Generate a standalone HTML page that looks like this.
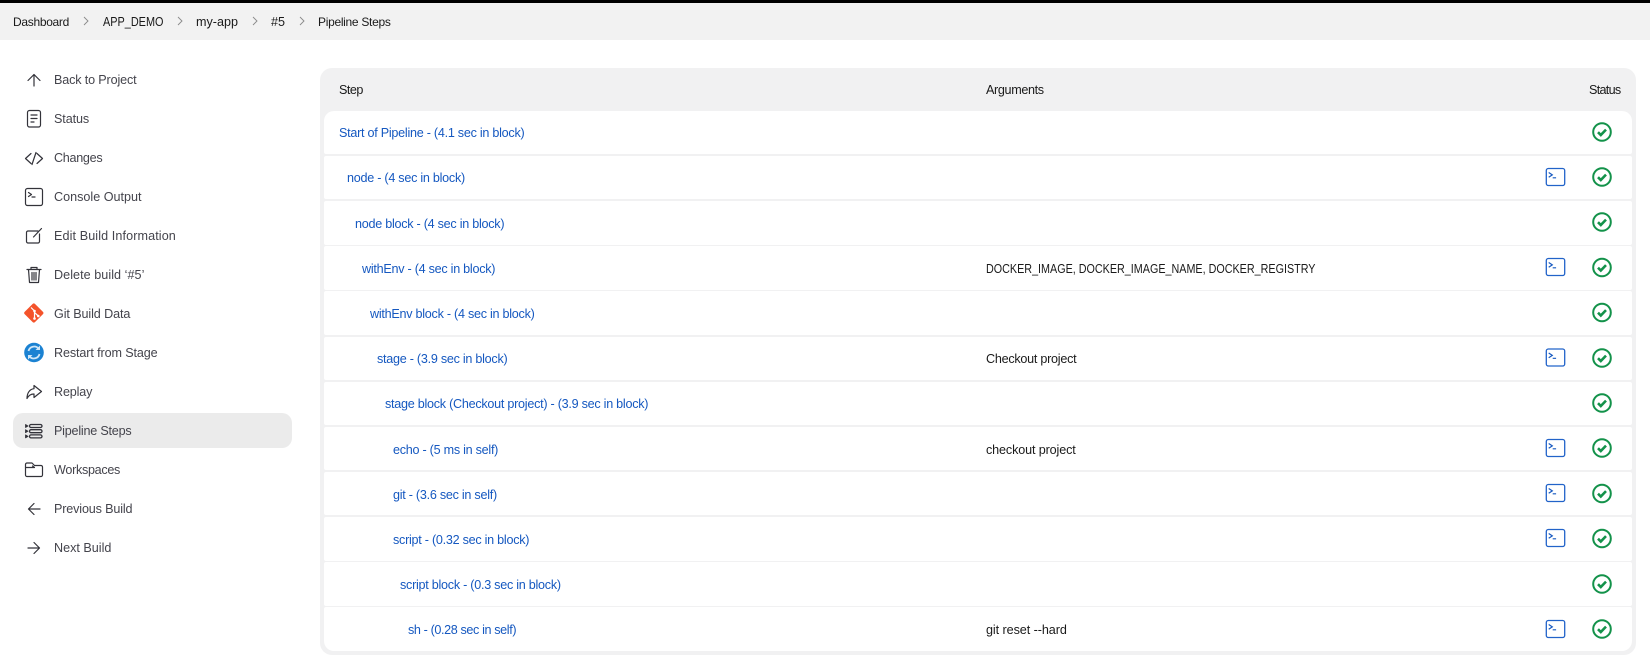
<!DOCTYPE html>
<html><head><meta charset="utf-8"><style>
html,body{margin:0;padding:0;background:#fff;width:1650px;height:662px;overflow:hidden;font-family:"Liberation Sans",sans-serif;font-size:12.6px;color:#1a1a1a}
#w{position:absolute;left:0;top:0;width:1650px;height:662px;filter:blur(.35px)}
.a{position:absolute;white-space:nowrap;line-height:16px}
.top{position:absolute;left:0;top:0;width:1650px;height:3px;background:#000}
.bc{position:absolute;left:0;top:3px;width:1650px;height:37px;background:#f2f2f2}
.hl{position:absolute;left:13px;top:413px;width:279px;height:35px;border-radius:10px;background:#ebebeb}
.side{color:#44444c;left:54px;letter-spacing:-.1px}
.panel{position:absolute;left:320px;top:68px;width:1316px;height:587px;background:#f1f1f2;border-radius:12px}
.row{position:absolute;left:324px;width:1308px;height:43.6px;background:#fff;border-radius:2px}
.l{color:#1558c0;letter-spacing:-.26px}
svg{position:absolute;overflow:visible}
</style></head><body><div id="w">
<div class="top"></div><div class="bc"></div>
<div class="a" style="left:13px;top:14px;font-size:12px;letter-spacing:-.3px">Dashboard</div>
<div class="a" style="left:103px;top:14px;transform:scaleX(.864);transform-origin:0 0">APP_DEMO</div>
<div class="a" style="left:196px;top:14px">my-app</div>
<div class="a" style="left:271px;top:14px">#5</div>
<div class="a" style="left:318px;top:14px;font-size:12px;letter-spacing:-.3px">Pipeline Steps</div>
<svg style="left:0;top:0" width="320" height="40" fill="none" stroke="#8a8a8a" stroke-width=".9"><path d="M84 17l4 4-4 4M178 17l4 4-4 4M253 17l4 4-4 4M300 17l4 4-4 4"/></svg>

<div class="hl"></div>
<div class="a side" style="top:72px;letter-spacing:-.15px">Back to Project</div>
<div class="a side" style="top:111px">Status</div>
<div class="a side" style="top:150px;letter-spacing:-.3px">Changes</div>
<div class="a side" style="top:189px;letter-spacing:0">Console Output</div>
<div class="a side" style="top:228px;letter-spacing:.1px">Edit Build Information</div>
<div class="a side" style="top:267px;letter-spacing:.05px">Delete build ‘#5’</div>
<div class="a side" style="top:306px">Git Build Data</div>
<div class="a side" style="top:345px;letter-spacing:-.12px">Restart from Stage</div>
<div class="a side" style="top:384px;letter-spacing:-.15px">Replay</div>
<div class="a side" style="top:423px;letter-spacing:-.22px">Pipeline Steps</div>
<div class="a side" style="top:462px;letter-spacing:-.3px">Workspaces</div>
<div class="a side" style="top:501px;letter-spacing:-.15px">Previous Build</div>
<div class="a side" style="top:540px;letter-spacing:0">Next Build</div>

<svg style="left:0;top:0" width="60" height="560" fill="none" stroke="#33333a" stroke-width="1.2" stroke-linecap="round" stroke-linejoin="round">
<path d="M34 86V74.500M28 80.500l6-6 6 6"/>
<rect x="27.500" y="110.500" width="13" height="16.500" rx="2"/><path d="M31 115h6M31 118.500h6M31 122h3"/>
<path d="M31 153.500l-5.500 5 5.500 5M37 153.500l5.500 5-5.500 5M36 152.500l-4 12"/>
<rect x="25.500" y="188.500" width="17" height="17" rx="2"/><path d="M28.500 192.500l3 2-3 2M32 197h3"/>
<path d="M38 231H28a1.500 1.500 0 0 0-1.500 1.500v9a1.500 1.500 0 0 0 1.500 1.500h10a1.500 1.500 0 0 0 1.500-1.500V234M33.500 237l8-8.500"/>
<path d="M27 269.500h14M31 269.500v-2h6v2M28.500 269.500l1 13h9l1-13M32 272.500v7.500M34 272.500v7.500M36 272.500v7.500"/>
<path d="M41.500 391.500L34 385.500v3.200c-4.500.5-7 4.500-7 9.800 1.500-3 4-4.500 7-4.500v3.500z"/>
<path d="M25.500 475v-10.500a1.500 1.500 0 0 1 1.500-1.500h5l2.500 2.500H41a1.500 1.500 0 0 1 1.500 1.500v8a1.500 1.500 0 0 1-1.500 1.500H27a1.500 1.500 0 0 1-1.500-1.500zM25.500 467.500h9l-2-1.500"/>
<path d="M40 509H28.500M34 503.500l-5.500 5.500 5.500 5.500"/>
<path d="M28 548h11.500M34 542.500l5.500 5.500-5.500 5.500"/>
<rect x="29.500" y="424.500" width="12.500" height="3" rx="1.500" stroke-width="1.300"/>
<rect x="29.500" y="429.700" width="12.500" height="3" rx="1.500" stroke-width="1.300"/>
<rect x="29.500" y="434.900" width="12.500" height="3" rx="1.500" stroke-width="1.300"/>
<path d="M25.500 424.500v3l2.500-1.500zM25.500 429.700v3l2.500-1.500zM25.500 434.900v3l2.500-1.500z" fill="#33333a" stroke-width=".8"/>
</svg>
<svg style="left:0;top:0" width="60" height="400">
<rect x="-7.300" y="-7.300" width="14.600" height="14.600" rx="1.800" transform="translate(33.800,313) rotate(45)" fill="#f4532b"/>
<path d="M31 307.500l3.500 3.500v7.500M34.500 312.500l3.800 3.500" stroke="#fff" stroke-width="1.200" fill="none"/>
<circle cx="34.500" cy="311" r="1.300" fill="#fff"/><circle cx="34.500" cy="318.500" r="1.300" fill="#fff"/><circle cx="38.300" cy="316" r="1.300" fill="#fff"/>
<circle cx="34" cy="352.500" r="9.800" fill="#1b82d2"/>
<path d="M28.500 351a5.800 5.800 0 0 1 10-2.500M39.500 354a5.800 5.800 0 0 1-10 2.500" stroke="#cfe6f7" stroke-width="1.800" fill="none"/>
<path d="M40 345.500v4.500h-4.500zM28 359.500V355h4.500z" fill="#cfe6f7"/>
</svg>

<div class="panel"></div>
<div class="a" style="left:339px;top:82px;letter-spacing:-.5px">Step</div>
<div class="a" style="left:986px;top:82px;letter-spacing:-.35px">Arguments</div>
<div class="a" style="left:1589px;top:82px;letter-spacing:-.7px">Status</div>

<div class="row" style="top:110.700px;border-radius:10px 10px 2px 2px"></div>
<div class="row" style="top:155.900px"></div>
<div class="row" style="top:201px"></div>
<div class="row" style="top:246.200px"></div>
<div class="row" style="top:291.300px"></div>
<div class="row" style="top:336.500px"></div>
<div class="row" style="top:381.600px"></div>
<div class="row" style="top:426.800px"></div>
<div class="row" style="top:471.900px"></div>
<div class="row" style="top:517.100px"></div>
<div class="row" style="top:562.200px"></div>
<div class="row" style="top:607.400px;border-radius:2px 2px 10px 10px"></div>

<div class="a l" style="left:339px;top:125px">Start of Pipeline - (4.1 sec in block)</div>
<div class="a l" style="left:347px;top:170px">node - (4 sec in block)</div>
<div class="a l" style="left:355px;top:216px">node block - (4 sec in block)</div>
<div class="a l" style="left:362px;top:261px">withEnv - (4 sec in block)</div>
<div class="a l" style="left:370px;top:306px">withEnv block - (4 sec in block)</div>
<div class="a l" style="left:377px;top:351px">stage - (3.9 sec in block)</div>
<div class="a l" style="left:385px;top:396px">stage block (Checkout project) - (3.9 sec in block)</div>
<div class="a l" style="left:393px;top:442px">echo - (5 ms in self)</div>
<div class="a l" style="left:393px;top:487px">git - (3.6 sec in self)</div>
<div class="a l" style="left:393px;top:532px">script - (0.32 sec in block)</div>
<div class="a l" style="left:400px;top:577px">script block - (0.3 sec in block)</div>
<div class="a l" style="left:408px;top:622px;letter-spacing:-.38px">sh - (0.28 sec in self)</div>

<div class="a" style="left:986px;top:261px;transform:scaleX(.855);transform-origin:0 0">DOCKER_IMAGE, DOCKER_IMAGE_NAME, DOCKER_REGISTRY</div>
<div class="a" style="left:986px;top:351px;letter-spacing:-.26px">Checkout project</div>
<div class="a" style="left:986px;top:442px;letter-spacing:-.13px">checkout project</div>
<div class="a" style="left:986px;top:622px;letter-spacing:-.07px">git reset --hard</div>

<svg width="0" height="0" style="left:0;top:0"><defs>
<g id="ok"><circle cx="0" cy="0" r="8.800" fill="none" stroke="#13924a" stroke-width="2"/><path d="M-4 .2l2.800 2.800 5.200-5.400" fill="none" stroke="#13924a" stroke-width="2.600"/></g>
<g id="t"><rect x="-9.200" y="-8.500" width="18.400" height="17" rx="2" fill="none" stroke="#2263c9" stroke-width="1.300"/><path d="M-6.800 -4.500l3.600 2.400-3.600 2.400M-2.800 0.800h3.400" fill="none" stroke="#1558c0" stroke-width="1.200"/></g>
</defs></svg>
<svg style="left:0;top:0" width="1650" height="662">
<use href="#ok" x="1602" y="132"/>
<use href="#ok" x="1602" y="177"/>
<use href="#ok" x="1602" y="222"/>
<use href="#ok" x="1602" y="267.500"/>
<use href="#ok" x="1602" y="312.500"/>
<use href="#ok" x="1602" y="358"/>
<use href="#ok" x="1602" y="403"/>
<use href="#ok" x="1602" y="448"/>
<use href="#ok" x="1602" y="493.500"/>
<use href="#ok" x="1602" y="538.500"/>
<use href="#ok" x="1602" y="584"/>
<use href="#ok" x="1602" y="629"/>
<use href="#t" x="1555.500" y="177"/>
<use href="#t" x="1555.500" y="267"/>
<use href="#t" x="1555.500" y="357.500"/>
<use href="#t" x="1555.500" y="448"/>
<use href="#t" x="1555.500" y="493"/>
<use href="#t" x="1555.500" y="538"/>
<use href="#t" x="1555.500" y="629"/>
</svg>
</div></body></html>
